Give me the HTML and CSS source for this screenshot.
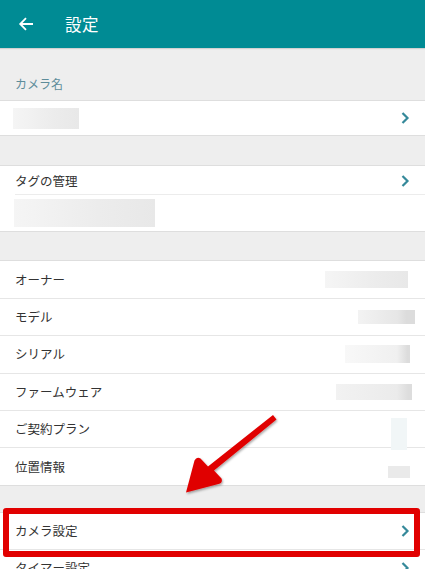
FILE: index.html
```html
<!DOCTYPE html>
<html lang="ja">
<head>
<meta charset="utf-8">
<link rel="stylesheet" href="styles.css">
</head>
<body>
<div class="screen">
  <header class="appbar">
    <svg class="back" width="16" height="16" viewBox="0 0 16 16"><path d="M15 8H2.5M8 2.2L2.2 8 8 13.8" fill="none" stroke="#fff" stroke-width="1.8"/></svg>
    <span class="title">設定</span>
  </header>

  <div class="section-label">カメラ名</div>
  <div class="group">
    <div class="row name">
      <span class="blur b-name"></span>
      <svg class="chev" width="10" height="14" viewBox="0 0 10 14"><path d="M2.5 2L7.5 7 2.5 12" fill="none" stroke="#35899a" stroke-width="2.2"/></svg>
    </div>
  </div>

  <div class="spacer s1"></div>
  <div class="group">
    <div class="row short inset">
      <span class="label">タグの管理</span>
      <svg class="chev" width="10" height="14" viewBox="0 0 10 14"><path d="M2.5 2L7.5 7 2.5 12" fill="none" stroke="#35899a" stroke-width="2.2"/></svg>
    </div>
    <div class="row">
      <span class="blur b-tag"></span>
    </div>
  </div>

  <div class="spacer s2"></div>
  <div class="group">
    <div class="row line"><span class="label">オーナー</span><span class="blur b-owner"></span></div>
    <div class="row line"><span class="label">モデル</span><span class="blur b-model"></span></div>
    <div class="row line"><span class="label">シリアル</span><span class="blur b-serial"></span></div>
    <div class="row line"><span class="label">ファームウェア</span><span class="blur b-fw"></span></div>
    <div class="row line"><span class="label">ご契約プラン</span><span class="blur b-plan"></span></div>
    <div class="row"><span class="label">位置情報</span><span class="blur b-loc"></span></div>
  </div>

  <div class="spacer s3"></div>
  <div class="group">
    <div class="row line">
      <span class="label">カメラ設定</span>
      <svg class="chev" width="10" height="14" viewBox="0 0 10 14"><path d="M2.5 2L7.5 7 2.5 12" fill="none" stroke="#35899a" stroke-width="2.2"/></svg>
    </div>
    <div class="row">
      <span class="label">タイマー設定</span>
      <svg class="chev" width="10" height="14" viewBox="0 0 10 14"><path d="M2.5 2L7.5 7 2.5 12" fill="none" stroke="#35899a" stroke-width="2.2"/></svg>
    </div>
  </div>

  <div class="highlight"></div>
  <svg class="arrow" width="425" height="569" viewBox="0 0 425 569">
    <defs>
      <filter id="sh" x="-20%" y="-20%" width="140%" height="140%">
        <feDropShadow dx="1" dy="1.5" stdDeviation="1.2" flood-color="#000" flood-opacity="0.35"/>
      </filter>
    </defs>
    <path d="M273 415 L276.5 419.5 L214 470.5 L221.5 478.5 Q223 483 218.5 484 L186 492.5 L194.5 460.5 Q196.5 456.5 200.5 458.5 L208 466.5 Z" fill="#e00000" filter="url(#sh)"/>
  </svg>
</div>
</body>
</html>
```
FILE: styles.css
```css
html, body {
  margin: 0;
  padding: 0;
}
body {
  background: #eeeeee;
  font-family: "Noto Sans CJK JP", "Noto Sans", sans-serif;
  color: #333333;
}
.screen {
  position: relative;
  width: 425px;
  height: 569px;
  overflow: hidden;
  background: #eeeeee;
}
.appbar {
  height: 48px;
  background: #008b94;
  display: flex;
  align-items: center;
  box-shadow: 0 1px 1px rgba(0,0,0,0.12);
}
.back {
  margin-left: 18px;
}
.title {
  margin-left: 31px;
  color: #ffffff;
  font-size: 16.5px;
  letter-spacing: 0.5px;
}
.section-label {
  height: 52px;
  box-sizing: border-box;
  padding: 28px 0 0 15px;
  font-size: 12px;
  color: #5d8c9a;
  line-height: 16px;
}
.group {
  background: #ffffff;
  border-top: 1px solid #dedede;
  border-bottom: 1px solid #dedede;
}
.spacer.s1 {
  height: 29px;
}
.spacer.s2 {
  height: 28px;
}
.spacer.s3 {
  height: 26px;
}
.row {
  height: 36.4px;
  display: flex;
  align-items: center;
  justify-content: space-between;
  padding: 0 15px 0 15px;
  position: relative;
  font-size: 12.5px;
}
.row.name {
  height: 34px;
}
.row.line {
  border-bottom: 1px solid #e6e6e6;
}
.row.short {
  height: 29px;
}
.row.inset::after {
  content: "";
  position: absolute;
  left: 15px;
  right: 0;
  bottom: 0;
  height: 1px;
  background: #ececec;
}
.label {
  line-height: 16px;
}
.blur {
  display: block;
  background: linear-gradient(90deg, #f5f5f5, #ececec 60%, #e8e8e8);
}
.b-name {
  width: 66px;
  height: 21px;
  margin-left: -2px;
}
.b-tag {
  width: 141px;
  height: 28px;
  margin-left: -1px;
}
.b-owner {
  width: 83px;
  height: 17px;
  margin-right: 2px;
}
.b-model {
  width: 57px;
  height: 14px;
  margin-right: -5px;
  background: linear-gradient(90deg, #f3f3f3, #e6e6e6 70%, #dcdcdc 85%);
}
.b-serial {
  width: 65px;
  height: 18px;
  background: linear-gradient(90deg, #f8f8f8, #f0f0f0 80%, #dcdcdc 96%);
}
.b-fw {
  width: 76px;
  height: 16px;
  margin-right: -2px;
  background: linear-gradient(90deg, #f2f2f2, #ebebeb 80%, #dddddd 95%);
}
.b-plan {
  width: 16px;
  height: 32px;
  margin-right: 3px;
  margin-top: 10px;
  background: #f1f6f7;
}
.b-loc {
  width: 22px;
  height: 12px;
  margin-right: 0;
  margin-top: 10px;
  background: #eaeaea;
}
.highlight {
  position: absolute;
  left: 3px;
  top: 508px;
  width: 417px;
  height: 49px;
  box-sizing: border-box;
  border: 6px solid #e10000;
  border-radius: 3px;
}
.arrow {
  position: absolute;
  left: 0;
  top: 0;
  pointer-events: none;
}
```
